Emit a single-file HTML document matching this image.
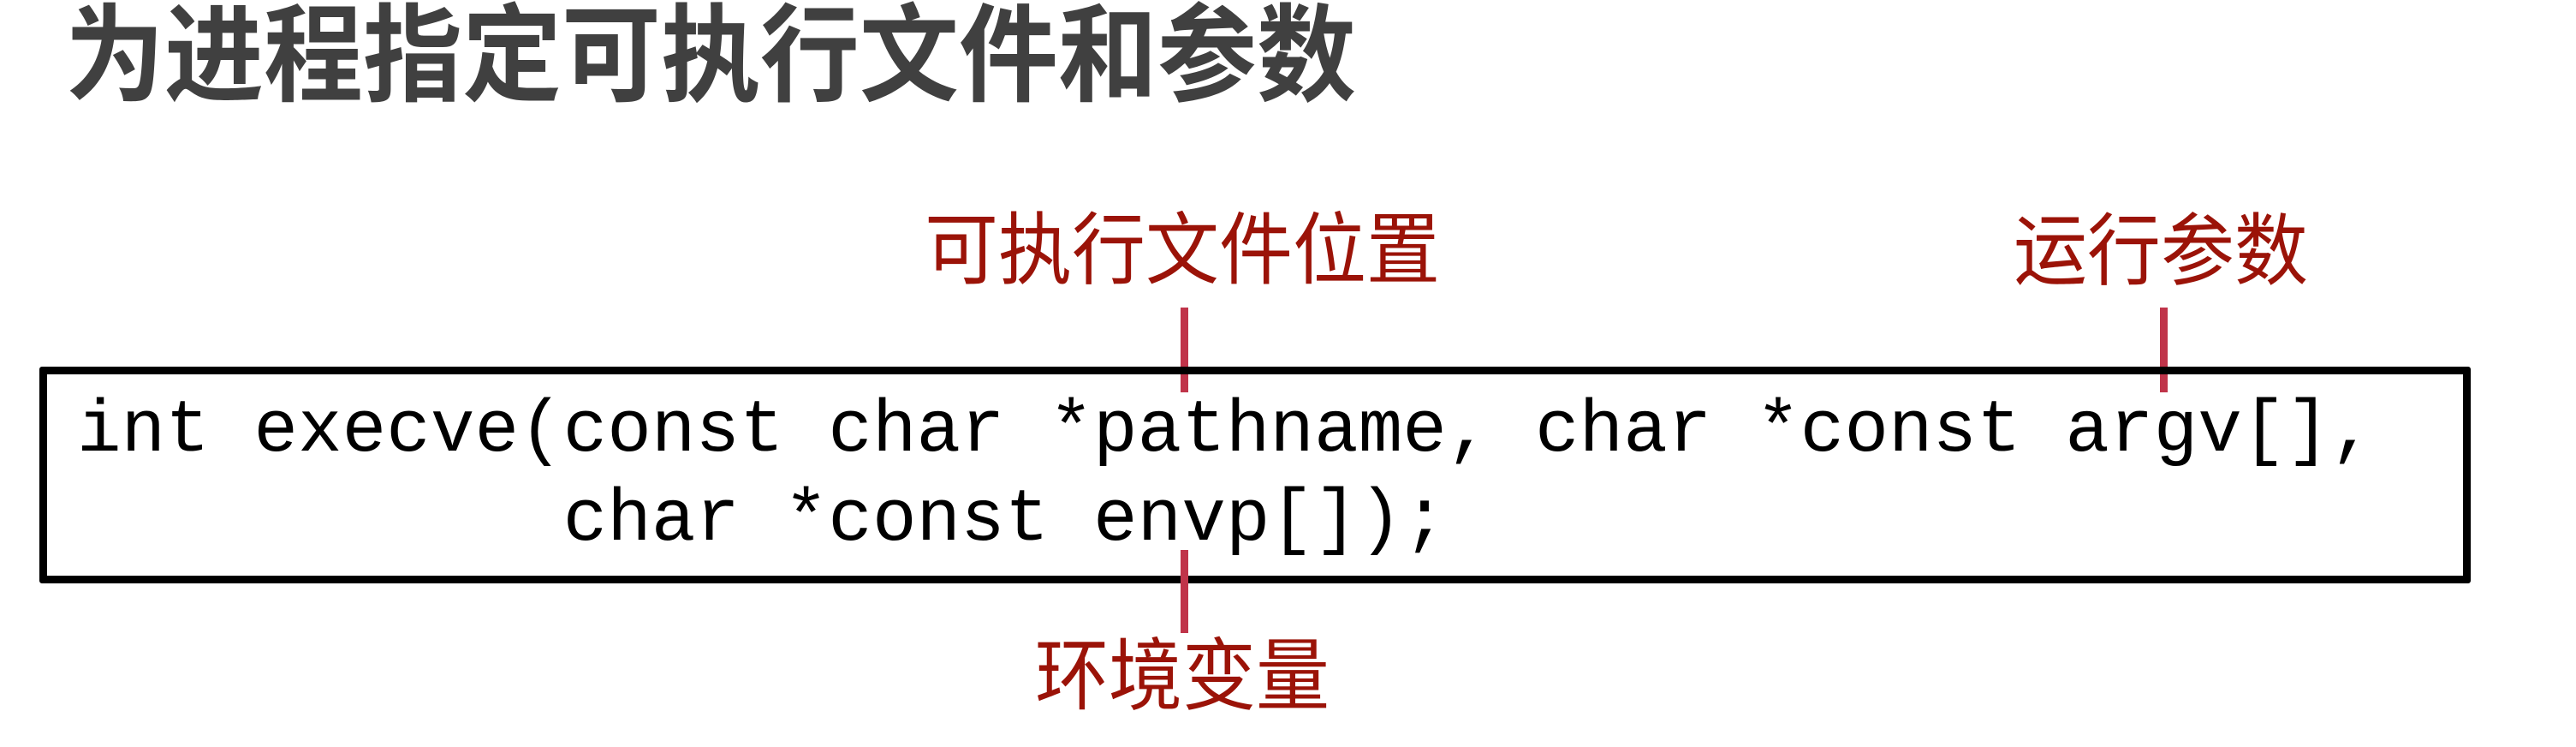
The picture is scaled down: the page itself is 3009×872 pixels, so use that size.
<!DOCTYPE html>
<html><head><meta charset="utf-8"><style>
html,body{margin:0;padding:0;background:#fff;width:3009px;height:872px;overflow:hidden;position:relative}
div{position:absolute}
.t{left:76px;top:3px;font:bold 116px/1 "Liberation Sans","Noto Sans CJK SC",sans-serif;color:#404040;white-space:nowrap;transform:scaleY(1.07);transform-origin:0 0}
.r{font:86px/1 "Liberation Sans","Noto Sans CJK SC",sans-serif;color:#9b1308;white-space:nowrap;transform:scaleY(1.07);transform-origin:0 0}
.ln{background:#c0344a;width:9px}
.box{left:46px;top:428px;width:2822px;height:235px;border:9px solid #000;border-radius:3px}
.code{left:90px;top:451px;font:86px/104px "Liberation Mono",monospace;color:#000;white-space:pre}
</style></head><body>
<div class="t">为进程指定可执行文件和参数</div>
<div class="r" style="left:1080px;top:247px">可执行文件位置</div>
<div class="r" style="left:2352px;top:248px">运行参数</div>
<div class="r" style="left:1209px;top:744px">环境变量</div>
<div class="ln" style="left:1379px;top:359px;height:99px"></div>
<div class="ln" style="left:2523px;top:359px;height:99px"></div>
<div class="box"></div>
<div class="ln" style="left:1379px;top:642px;height:97px"></div>
<div class="code">int execve(const char *pathname, char *const argv[],
           char *const envp[]);</div>
</body></html>
